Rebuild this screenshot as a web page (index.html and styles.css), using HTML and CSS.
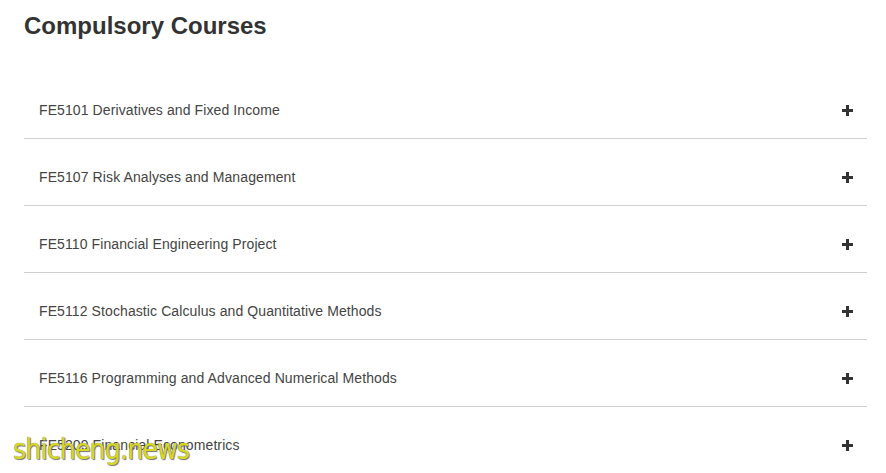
FILE: index.html
```html
<!DOCTYPE html>
<html>
<head>
<meta charset="utf-8">
<link rel="stylesheet" href="styles.css">
</head>
<body>
<div class="page">
  <h2 class="title">Compulsory Courses</h2>
  <ul class="list">
    <li class="row"><span class="name">FE5101 Derivatives and Fixed Income</span><span class="plus"></span></li>
    <li class="row"><span class="name">FE5107 Risk Analyses and Management</span><span class="plus"></span></li>
    <li class="row"><span class="name">FE5110 Financial Engineering Project</span><span class="plus"></span></li>
    <li class="row"><span class="name">FE5112 Stochastic Calculus and Quantitative Methods</span><span class="plus"></span></li>
    <li class="row"><span class="name">FE5116 Programming and Advanced Numerical Methods</span><span class="plus"></span></li>
    <li class="row"><span class="name">FE5209 Financial Econometrics</span><span class="plus"></span></li>
  </ul>
</div>
<div class="watermark">shicheng.news</div>
</body>
</html>
```
FILE: styles.css
```css
html, body {
  margin: 0;
  padding: 0;
  background: #fff;
  overflow: hidden;
}
body {
  width: 886px;
  height: 473px;
  position: relative;
  font-family: "Liberation Sans", Arial, sans-serif;
}
.page {
  padding: 11px 19px 0 24px;
}
.title {
  margin: 0;
  font-size: 24px;
  line-height: 29px;
  font-weight: bold;
  color: #333;
}
.list {
  list-style: none;
  margin: 32px 0 0 0;
  padding: 0;
}
.row {
  display: flex;
  align-items: center;
  justify-content: space-between;
  padding: 29px 14px 19px 15px;
  line-height: 18px;
  border-bottom: 1px solid #cfcfcf;
}
.name {
  font-size: 14px;
  letter-spacing: 0.1px;
  color: #444;
}
.plus {
  position: relative;
  width: 11px;
  height: 11px;
}
.plus::before,
.plus::after {
  content: "";
  position: absolute;
  background: #333;
}
.plus::before {
  left: 0;
  top: 4px;
  width: 11px;
  height: 3px;
}
.plus::after {
  left: 4px;
  top: 0;
  width: 3px;
  height: 11px;
}
.watermark {
  position: absolute;
  left: 13px;
  top: 433px;
  font-family: "DejaVu Sans Condensed", "DejaVu Sans", sans-serif;
  font-stretch: condensed;
  font-size: 28px;
  line-height: 34px;
  letter-spacing: -0.8px;
  color: rgba(232, 232, 20, 0.88);
  text-shadow: 0 0 1px #666, 1px 1px 1px #777;
}
```
